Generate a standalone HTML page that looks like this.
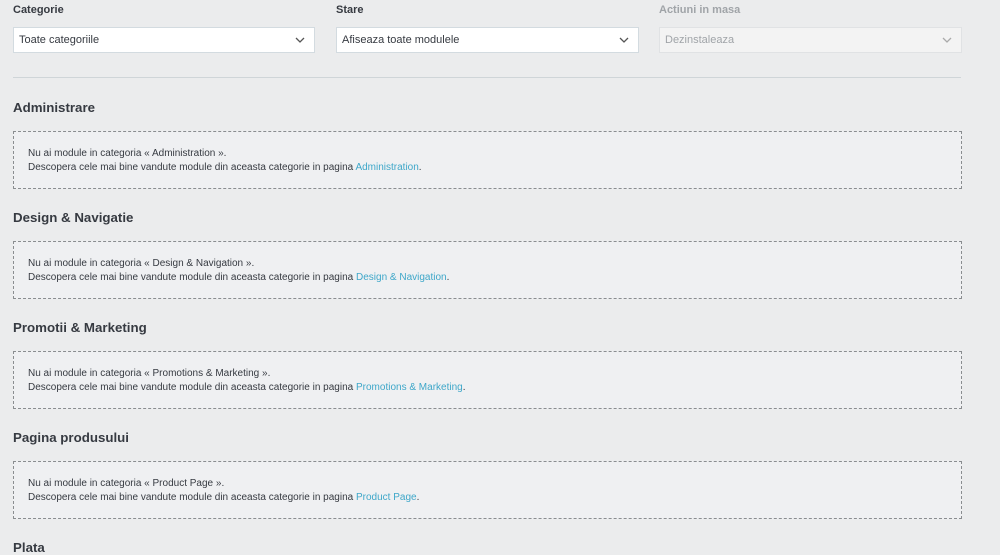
<!DOCTYPE html><html><head><style>
html,body{margin:0;width:1000px;height:544px;overflow:hidden;background:#ebeced;font-family:"Liberation Sans",sans-serif;color:#363a41;}
.lbl{position:absolute;top:4px;font-size:11px;font-weight:bold;}
.sel{position:absolute;top:27px;height:26px;width:300px;background:#fff;border:1px solid #d3dbe0;font-size:11px;line-height:24px;box-sizing:border-box;padding-left:5px;}
.sel svg{position:absolute;right:9px;top:9px;}
.dis{background:#f3f3f3;color:#a0a4a8;border-color:#e0e2e4;}
hr{position:absolute;top:77px;left:13px;width:948px;margin:0;border:0;border-top:1px solid #cfd5d8;}
h2{position:absolute;left:13px;margin:0;font-size:13.3px;font-weight:bold;}
.box{position:absolute;left:13px;width:949px;height:58px;box-sizing:border-box;border:1px dashed #8a8d90;background:#eff0f2;font-size:10px;padding:15px 0 0 14px;line-height:14px;}
a{color:#3ea7c9;text-decoration:none;}
</style></head><body>
<div class="lbl" style="left:13px">Categorie</div>
<div class="lbl" style="left:336px">Stare</div>
<div class="lbl" style="left:659px;color:#a0a4a8">Actiuni in masa</div>
<div class="sel" style="left:13px;width:302px">Toate categoriile<svg width="10" height="7"><path d="M1 1l4 4 4-4" stroke="#555" fill="none" stroke-width="1.3"/></svg></div>
<div class="sel" style="left:336px;width:303px">Afiseaza toate modulele<svg width="10" height="7"><path d="M1 1l4 4 4-4" stroke="#555" fill="none" stroke-width="1.3"/></svg></div>
<div class="sel dis" style="left:659px;width:303px">Dezinstaleaza<svg width="10" height="7"><path d="M1 1l4 4 4-4" stroke="#aaa" fill="none" stroke-width="1.3"/></svg></div>
<hr>
<h2 style="top:100px">Administrare</h2>
<div class="box" style="top:131px">Nu ai module in categoria « Administration ».<br>Descopera cele mai bine vandute module din aceasta categorie in pagina <a>Administration</a>.</div>
<h2 style="top:210px">Design &amp; Navigatie</h2>
<div class="box" style="top:241px">Nu ai module in categoria « Design &amp; Navigation ».<br>Descopera cele mai bine vandute module din aceasta categorie in pagina <a>Design &amp; Navigation</a>.</div>
<h2 style="top:320px">Promotii &amp; Marketing</h2>
<div class="box" style="top:351px">Nu ai module in categoria « Promotions &amp; Marketing ».<br>Descopera cele mai bine vandute module din aceasta categorie in pagina <a>Promotions &amp; Marketing</a>.</div>
<h2 style="top:430px">Pagina produsului</h2>
<div class="box" style="top:461px">Nu ai module in categoria « Product Page ».<br>Descopera cele mai bine vandute module din aceasta categorie in pagina <a>Product Page</a>.</div>
<h2 style="top:540px">Plata</h2>
</body></html>
